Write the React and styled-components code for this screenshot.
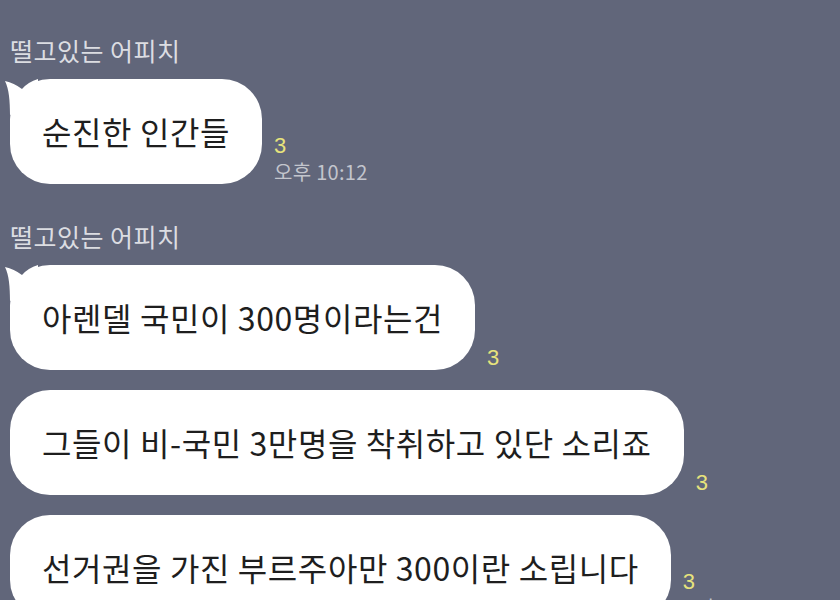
import React from "react";
import styled, { createGlobalStyle } from "styled-components";

const GlobalStyle = createGlobalStyle`
  html, body {
    margin: 0;
    padding: 0;
    background: #61667a;
    overflow: hidden;
  }
  body {
    font-family: "Noto Sans CJK KR", "Noto Sans", sans-serif;
  }
`;

const Chat = styled.div`
  display: flex;
  flex-direction: column;
  padding: 34px 0 0 10px;
`;

const Group = styled.section`
  display: flex;
  flex-direction: column;
  gap: 20px;
  margin-bottom: 36px;
`;

const Sender = styled.div`
  font-size: 25px;
  letter-spacing: 0.5px;
  line-height: 32px;
  height: 32px;
  color: #dcdde2;
  margin-bottom: -7px;
`;

const Row = styled.div`
  display: flex;
  align-items: flex-end;
  gap: 12px;
`;

const Bubble = styled.div`
  position: relative;
  background: #ffffff;
  border-radius: 40px;
  padding: 30px 32px;
  font-size: 32px;
  letter-spacing: 0.6px;
  line-height: 45px;
  color: #1e1e1e;
  white-space: nowrap;
`;

const Tail = styled.svg`
  position: absolute;
  left: -6px;
  top: 0;
  width: 40px;
  height: 40px;
  overflow: visible;
`;

const Meta = styled.div`
  display: flex;
  flex-direction: column;
  align-items: flex-start;
`;

const Unread = styled.span`
  font-family: "Liberation Sans", sans-serif;
  font-size: 22px;
  line-height: 24px;
  color: #e7e37c;
`;

const Time = styled.span`
  font-size: 20px;
  letter-spacing: 0.3px;
  line-height: 24px;
  color: #c3c5cd;
  margin-top: 2px;
`;

const TailShape = () => (
  <Tail viewBox="0 0 40 40">
    <path
      d="M1 2 Q 10 4 18 10 Q 24 3 34 0 L 34 26 L 6 36 C 6 22 5 10 1 2 Z"
      fill="#ffffff"
    />
  </Tail>
);

const Message = ({ text, unread, time, tail }) => (
  <Row>
    <Bubble>
      {tail && <TailShape />}
      {text}
    </Bubble>
    <Meta>
      <Unread>{unread}</Unread>
      {time && <Time>{time}</Time>}
    </Meta>
  </Row>
);

const groups = [
  {
    sender: "떨고있는 어피치",
    messages: [{ text: "순진한 인간들", unread: 3, time: "오후 10:12" }],
  },
  {
    sender: "떨고있는 어피치",
    messages: [
      { text: "아렌델 국민이 300명이라는건", unread: 3 },
      { text: "그들이 비-국민 3만명을 착취하고 있단 소리죠", unread: 3 },
      { text: "선거권을 가진 부르주아만 300이란 소립니다", unread: 3, time: "오후 10:12" },
    ],
  },
];

export default function App() {
  return (
    <>
      <GlobalStyle />
      <Chat>
        {groups.map((g, gi) => (
          <Group key={gi}>
            <Sender>{g.sender}</Sender>
            {g.messages.map((m, mi) => (
              <Message key={mi} {...m} tail={mi === 0} />
            ))}
          </Group>
        ))}
      </Chat>
    </>
  );
}
